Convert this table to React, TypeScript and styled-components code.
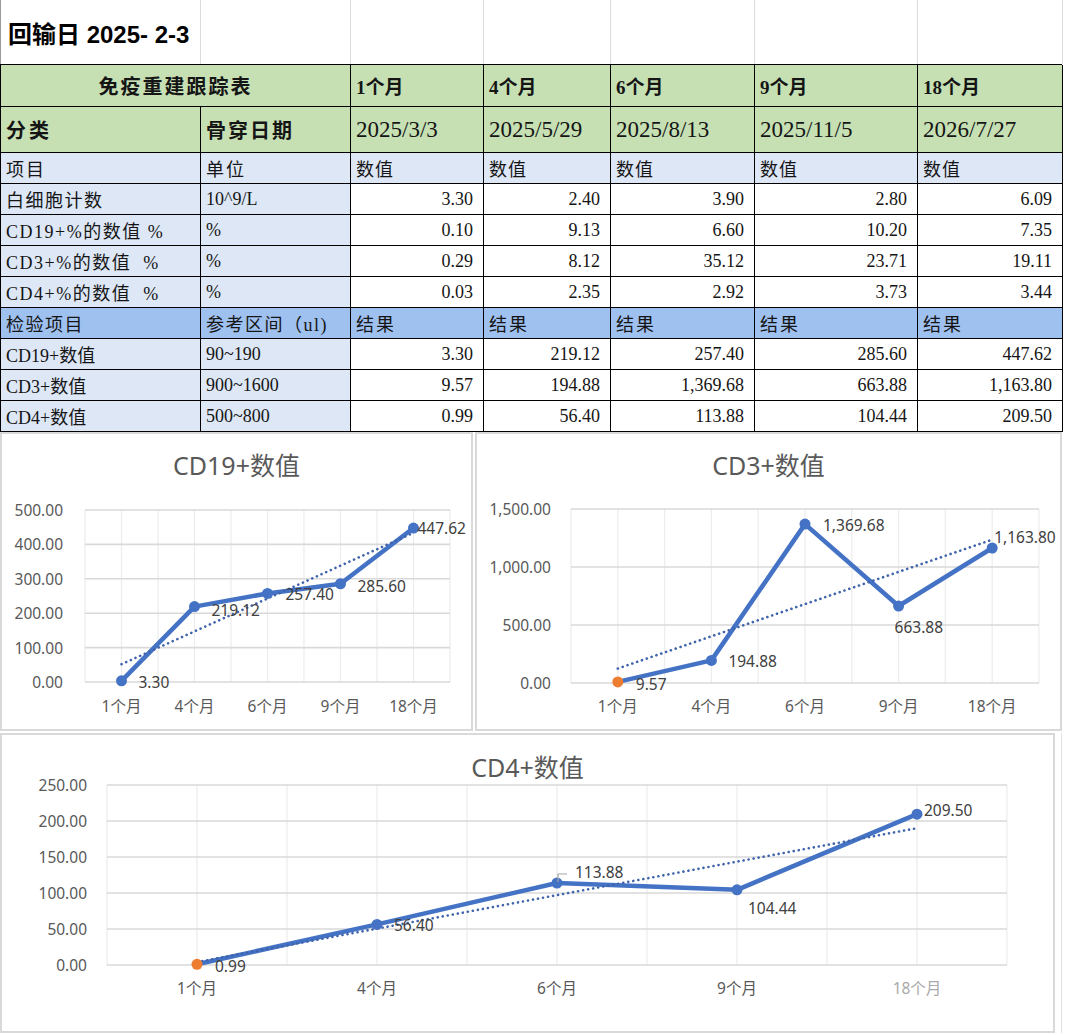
import React from "react";
import styled, { createGlobalStyle } from "styled-components";

const GlobalStyle = createGlobalStyle`
  html, body {
    margin: 0;
    padding: 0;
    background: #ffffff;
  }
  * {
    box-sizing: border-box;
  }
`;

type Tone = "white" | "green" | "light" | "blue";

const TONES: Record<Tone, string> = {
  white: "#ffffff",
  green: "#c6e0b4",
  light: "#dde7f6",
  blue: "#9fc1f0",
};

const COLS = "200px 150px 133px 127px 144px 163px 145px";

const MONTHS = ["1个月", "4个月", "6个月", "9个月", "18个月"];
const DATES = ["2025/3/3", "2025/5/29", "2025/8/13", "2025/11/5", "2026/7/27"];

const PERCENT_ROWS = [
  { name: "白细胞计数", unit: "10^9/L", values: [3.3, 2.4, 3.9, 2.8, 6.09] },
  { name: "CD19+%的数值 %", unit: "%", values: [0.1, 9.13, 6.6, 10.2, 7.35] },
  { name: "CD3+%的数值  %", unit: "%", values: [0.29, 8.12, 35.12, 23.71, 19.11] },
  { name: "CD4+%的数值  %", unit: "%", values: [0.03, 2.35, 2.92, 3.73, 3.44] },
];

const COUNT_ROWS = [
  { name: "CD19+数值", unit: "90~190", values: [3.3, 219.12, 257.4, 285.6, 447.62] },
  { name: "CD3+数值", unit: "900~1600", values: [9.57, 194.88, 1369.68, 663.88, 1163.8] },
  { name: "CD4+数值", unit: "500~800", values: [0.99, 56.4, 113.88, 104.44, 209.5] },
];

const fmt = (v: number) =>
  v.toLocaleString("en-US", { minimumFractionDigits: 2, maximumFractionDigits: 2 });

const Page = styled.div`
  width: 1065px;
  height: 1035px;
  overflow: hidden;
  background: #fff;
`;

const SheetTitleRow = styled.div`
  display: grid;
  grid-template-columns: ${COLS};
  height: 64px;
  border-left: 1px solid #9a9a9a;
`;

const SheetTitleCell = styled.div`
  border-right: 1px solid #dcdcdc;
  display: flex;
  align-items: center;
  padding-left: 7px;
  font-family: "Liberation Sans", "Noto Sans CJK SC", sans-serif;
  font-size: 24px;
  font-weight: 700;
  color: #000;
  white-space: nowrap;
`;

const Table = styled.div`
  width: 1062px;
  border-top: 1px solid #000;
  border-left: 1px solid #000;
`;

const Row = styled.div<{ $h: number }>`
  display: grid;
  grid-template-columns: ${COLS};
  height: ${(p) => p.$h}px;
`;

const Cell = styled.div<{
  $tone?: Tone;
  $align?: "left" | "right" | "center";
  $bold?: boolean;
  $span?: number;
  $size?: number;
  $spacing?: number;
}>`
  grid-column: span ${(p) => p.$span ?? 1};
  background: ${(p) => TONES[p.$tone ?? "white"]};
  border-right: 1px solid #000;
  border-bottom: 1px solid #000;
  display: flex;
  align-items: center;
  justify-content: ${(p) =>
    p.$align === "right" ? "flex-end" : p.$align === "center" ? "center" : "flex-start"};
  padding: ${(p) => (p.$align === "right" ? "0 10px 0 0" : p.$align === "center" ? "0" : "0 0 0 5px")};
  font-family: "Liberation Serif", "Noto Sans CJK SC", serif;
  font-size: ${(p) => p.$size ?? 18}px;
  font-weight: ${(p) => (p.$bold ? 700 : 400)};
  letter-spacing: ${(p) => p.$spacing ?? 0}px;
  white-space: pre;
  overflow: hidden;
  color: #151515;
`;

/* ---------- charts ---------- */

const ChartsRow = styled.div`
  display: flex;
  gap: 2px;
`;

const BottomRow = styled.div`
  display: flex;
  margin-top: 2px;
`;

const SheetFiller = styled.div`
  width: 7px;
  border-right: 1px solid #e2e2e2;
`;

const ChartCard = styled.div<{ $w: number; $h: number }>`
  width: ${(p) => p.$w}px;
  height: ${(p) => p.$h}px;
  border: 2px solid #d9d9d9;
  background: #fff;
  flex-shrink: 0;

  svg {
    display: block;
  }
`;

const TitleText = styled.text`
  font-family: "Noto Sans", "Noto Sans CJK SC", sans-serif;
  font-size: 25px;
  fill: #595959;
`;

const AxisText = styled.text<{ $faded?: boolean }>`
  font-family: "Noto Sans", "Noto Sans CJK SC", sans-serif;
  font-size: 15.5px;
  fill: ${(p) => (p.$faded ? "#a9a9a9" : "#595959")};
`;

const DataText = styled.text`
  font-family: "Noto Sans", "Noto Sans CJK SC", sans-serif;
  font-size: 15.5px;
  fill: #404040;
`;

interface LabelSpot {
  dx: number;
  dy: number;
  leader?: boolean;
}

interface ChartSpec {
  title: string;
  left: number;
  top: number;
  width: number;
  height: number;
  titleY: number;
  x0: number;
  x1: number;
  yTop: number;
  yBot: number;
  yMax: number;
  yStep: number;
  yLabelRight: number;
  xLabelY: number;
  values: number[];
  spots: LabelSpot[];
  firstOrange?: boolean;
  fadedLast?: boolean;
}

const BLUE = "#4472c4";
const ORANGE = "#ed7d31";

const trend = (vals: number[]) => {
  const n = vals.length;
  const mx = (n + 1) / 2;
  const my = vals.reduce((a, b) => a + b, 0) / n;
  let num = 0;
  let den = 0;
  vals.forEach((v, i) => {
    num += (i + 1 - mx) * (v - my);
    den += (i + 1 - mx) ** 2;
  });
  const slope = num / den;
  return (x: number) => my + slope * (x - mx);
};

// coordinates in specs are page pixels; the svg sits inside the 2px card border
const LineChart = ({ spec }: { spec: ChartSpec }) => {
  const ox = spec.left + 2;
  const oy = spec.top + 2;
  const svgW = spec.width - 4;
  const svgH = spec.height - 4;
  const step = (spec.x1 - spec.x0) / 5;
  const cx = (i: number) => spec.x0 + step * (i + 0.5) - ox;
  const cy = (v: number) => spec.yBot - (v / spec.yMax) * (spec.yBot - spec.yTop) - oy;

  const vLines = Array.from({ length: 11 }, (_, i) => spec.x0 + (step / 2) * i - ox);
  const ticks: number[] = [];
  for (let v = 0; v <= spec.yMax + 0.001; v += spec.yStep) ticks.push(v);

  const tr = trend(spec.values);
  const linePts = spec.values.map((v, i) => `${cx(i)},${cy(v)}`).join(" ");

  return (
    <ChartCard $w={spec.width} $h={spec.height}>
      <svg width={svgW} height={svgH} viewBox={`0 0 ${svgW} ${svgH}`}>
        <TitleText x={svgW / 2} y={spec.titleY - oy} textAnchor="middle" dominantBaseline="central">
          {spec.title}
        </TitleText>
        {vLines.map((x, i) => (
          <line key={`v${i}`} x1={x} x2={x} y1={spec.yTop - oy} y2={spec.yBot - oy} stroke="#ececec" strokeWidth={1.2} />
        ))}
        {ticks.map((t) => (
          <g key={`h${t}`}>
            <line
              x1={spec.x0 - ox}
              x2={spec.x1 - ox}
              y1={cy(t)}
              y2={cy(t)}
              stroke="#d9d9d9"
              strokeWidth={1.6}
            />
            <AxisText x={spec.yLabelRight - ox} y={cy(t)} textAnchor="end" dominantBaseline="central">
              {fmt(t)}
            </AxisText>
          </g>
        ))}
        {MONTHS.map((m, i) => (
          <AxisText
            key={m}
            x={cx(i)}
            y={spec.xLabelY - oy}
            textAnchor="middle"
            dominantBaseline="central"
            $faded={spec.fadedLast && i === MONTHS.length - 1}
          >
            {m}
          </AxisText>
        ))}
        <polyline points={linePts} fill="none" stroke={BLUE} strokeWidth={4.5} strokeLinejoin="round" />
        <line
          x1={cx(0)}
          y1={cy(tr(1))}
          x2={cx(4)}
          y2={cy(tr(5))}
          stroke="#3f64ab"
          strokeWidth={2.6}
          strokeDasharray="0.1 5"
          strokeLinecap="round"
        />
        {spec.values.map((v, i) => (
          <circle
            key={`p${i}`}
            cx={cx(i)}
            cy={cy(v)}
            r={5.5}
            fill={i === 0 && spec.firstOrange ? ORANGE : BLUE}
          />
        ))}
        {spec.values.map((v, i) => {
          const s = spec.spots[i];
          const px = cx(i);
          const py = cy(v);
          return (
            <g key={`l${i}`}>
              {s.leader && (
                <path
                  d={`M ${px + 1} ${py - 1} V ${py - 9} H ${px + 10}`}
                  fill="none"
                  stroke="#a6a6a6"
                  strokeWidth={1.2}
                />
              )}
              <DataText x={px + s.dx} y={py + s.dy} dominantBaseline="central">
                {fmt(v)}
              </DataText>
            </g>
          );
        })}
      </svg>
    </ChartCard>
  );
};

const CHART_CD19: ChartSpec = {
  title: "CD19+数值",
  left: 0,
  top: 432,
  width: 473,
  height: 299,
  titleY: 465,
  x0: 85,
  x1: 450,
  yTop: 510,
  yBot: 682,
  yMax: 500,
  yStep: 100,
  yLabelRight: 63,
  xLabelY: 706,
  values: COUNT_ROWS[0].values,
  spots: [
    { dx: 17, dy: 1 },
    { dx: 17, dy: 3 },
    { dx: 18, dy: 1 },
    { dx: 17, dy: 2 },
    { dx: 4, dy: 0 },
  ],
};

const CHART_CD3: ChartSpec = {
  title: "CD3+数值",
  left: 475,
  top: 432,
  width: 587,
  height: 299,
  titleY: 465,
  x0: 571,
  x1: 1039,
  yTop: 509,
  yBot: 683,
  yMax: 1500,
  yStep: 500,
  yLabelRight: 551,
  xLabelY: 706,
  values: COUNT_ROWS[1].values,
  firstOrange: true,
  spots: [
    { dx: 18, dy: 2 },
    { dx: 17, dy: 1 },
    { dx: 18, dy: 1 },
    { dx: -4, dy: 21 },
    { dx: 2, dy: -11 },
  ],
};

const CHART_CD4: ChartSpec = {
  title: "CD4+数值",
  left: 0,
  top: 733,
  width: 1055,
  height: 300,
  titleY: 767,
  x0: 107,
  x1: 1007,
  yTop: 785,
  yBot: 965,
  yMax: 250,
  yStep: 50,
  yLabelRight: 87,
  xLabelY: 988,
  values: COUNT_ROWS[2].values,
  firstOrange: true,
  fadedLast: true,
  spots: [
    { dx: 18, dy: 2 },
    { dx: 17, dy: 1 },
    { dx: 18, dy: -11, leader: true },
    { dx: 11, dy: 18 },
    { dx: 7, dy: -4 },
  ],
};

export default function App() {
  return (
    <Page>
      <GlobalStyle />
      <SheetTitleRow>
        <SheetTitleCell>回输日 2025- 2-3</SheetTitleCell>
        {Array.from({ length: 6 }, (_, i) => (
          <SheetTitleCell key={i} />
        ))}
      </SheetTitleRow>

      <Table>
        <Row $h={42}>
          <Cell $tone="green" $span={2} $align="center" $bold $size={20} $spacing={2}>
            免疫重建跟踪表
          </Cell>
          {MONTHS.map((m) => (
            <Cell key={m} $tone="green" $bold $size={19}>
              {m}
            </Cell>
          ))}
        </Row>
        <Row $h={46}>
          <Cell $tone="green" $bold $size={20} $spacing={3}>
            分类
          </Cell>
          <Cell $tone="green" $bold $size={20} $spacing={2}>
            骨穿日期
          </Cell>
          {DATES.map((d) => (
            <Cell key={d} $tone="green" $size={23}>
              {d}
            </Cell>
          ))}
        </Row>
        <Row $h={31}>
          <Cell $tone="light" $spacing={2}>项目</Cell>
          <Cell $tone="light" $spacing={2}>单位</Cell>
          {MONTHS.map((m) => (
            <Cell key={m} $tone="light" $spacing={1}>
              数值
            </Cell>
          ))}
        </Row>
        {PERCENT_ROWS.map((r) => (
          <Row key={r.name} $h={31}>
            <Cell $tone="light" $spacing={1.5}>{r.name}</Cell>
            <Cell $tone="light">{r.unit}</Cell>
            {r.values.map((v, i) => (
              <Cell key={i} $align="right">
                {fmt(v)}
              </Cell>
            ))}
          </Row>
        ))}
        <Row $h={31}>
          <Cell $tone="blue" $spacing={1.5}>检验项目</Cell>
          <Cell $tone="blue" $spacing={1.5}>参考区间（ul)</Cell>
          {MONTHS.map((m) => (
            <Cell key={m} $tone="blue" $spacing={2}>
              结果
            </Cell>
          ))}
        </Row>
        {COUNT_ROWS.map((r) => (
          <Row key={r.name} $h={31}>
            <Cell $tone="light">{r.name}</Cell>
            <Cell $tone="light">{r.unit}</Cell>
            {r.values.map((v, i) => (
              <Cell key={i} $align="right">
                {fmt(v)}
              </Cell>
            ))}
          </Row>
        ))}
      </Table>

      <ChartsRow>
        <LineChart spec={CHART_CD19} />
        <LineChart spec={CHART_CD3} />
      </ChartsRow>
      <BottomRow>
        <LineChart spec={CHART_CD4} />
        <SheetFiller />
      </BottomRow>
    </Page>
  );
}
